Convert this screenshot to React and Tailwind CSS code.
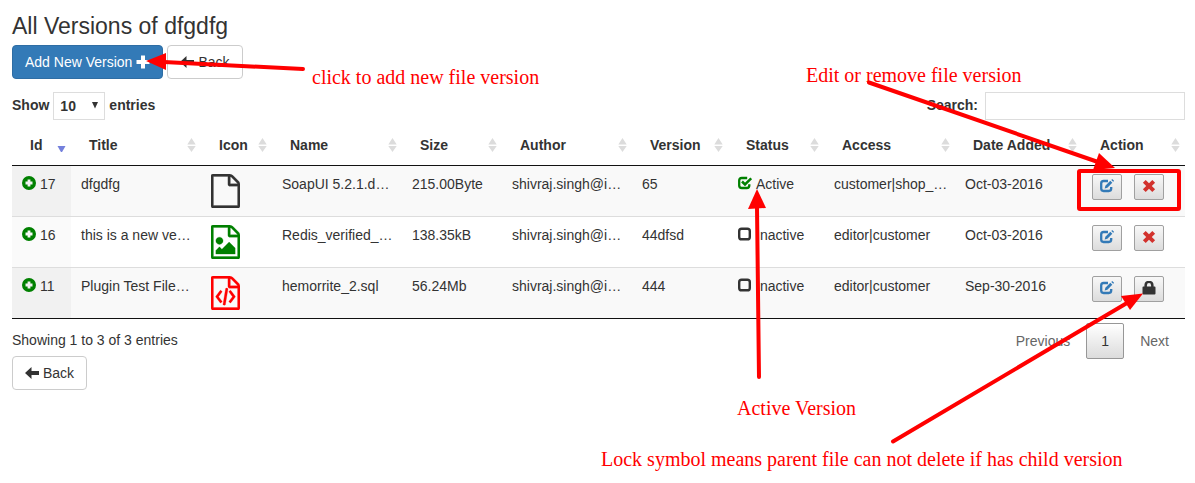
import React from "react";

const PAGE =
  "M1596 380q28 28 48 76t20 88v1152q0 40-28 68t-68 28h-1344q-40 0-68-28t-28-68v-1600q0-40 28-68t68-28h896q40 0 88 20t76 48zm-444-244v376h376q-10-29-22-41l-313-313q-12-12-41-22zm384 1528v-1024h-416q-40 0-68-28t-28-68v-416h-768v1536h1280z";
const PICTURE =
  "M1408 1216v320h-1024v-192l192-192 128 128 384-384zm-832-192q-80 0-136-56t-56-136 56-136 136-56 136 56 56 136-56 136-136 56z";
const CODE =
  "M608 768q8-11 21-12.5t24 6.5l51 38q11 8 12.5 21t-6.5 24l-182 243 182 243q8 11 6.5 24t-12.5 21l-51 38q-11 8-24 6.5t-21-12.5l-226-301q-14-19 0-38zm802 301q14 19 0 38l-226 301q-8 11-21 12.5t-24-6.5l-51-38q-11-8-12.5-21t6.5-24l182-243-182-243q-8-11-6.5-24t12.5-21l51-38q11-8 24-6.5t21 12.5zm-620 461q-13-2-20.5-13t-5.5-24l138-831q2-13 13-20.5t24-5.5l63 10q13 2 20.5 13t5.5 24l-138 831q-2 13-13 20.5t-24 5.5z";

function FileIcon({ kind }) {
  return (
    <svg
      viewBox="128 0 1536 1792"
      className="block h-[34px] w-[29px]"
      fill="currentColor"
      stroke="currentColor"
      strokeWidth="14"
      aria-hidden="true"
    >
      <path d={PAGE} />
      {kind === "image" && <path d={PICTURE} />}
      {kind === "code" && <path d={CODE} />}
    </svg>
  );
}

function Glyph({ children, className = "" }) {
  return (
    <svg viewBox="0 0 14 14" className={`size-3.5 shrink-0 ${className}`} fill="currentColor" aria-hidden="true">
      {children}
    </svg>
  );
}

const PlusIcon = () => (
  <Glyph>
    <path d="M5 .5h4V5h4.500v4H9v4.500H5V9H.5V5H5z" />
  </Glyph>
);
const BackIcon = () => (
  <Glyph>
    <path d="M0 7 6.500 1v4H14v4H6.500v4z" />
  </Glyph>
);
const ExpandIcon = () => (
  <Glyph>
    <path
      fillRule="evenodd"
      d="M7 0a7 7 0 1 1 0 14A7 7 0 0 1 7 0zM5.6 3.5v2.1H3.5v2.8h2.1v2.1h2.8V8.4h2.1V5.6H8.4V3.5z"
    />
  </Glyph>
);
const CheckedIcon = () => (
  <Glyph className="text-[#008000]">
    <path
      d="M9.200 2H3.700Q1.200 2 1.200 4.500v5Q1.200 12 3.700 12h5.100q2.500 0 2.500-2.500V8.300"
      fill="none"
      stroke="currentColor"
      strokeWidth="2.300"
    />
    <path d="m4 5.500 3 3 6.200-6.200" fill="none" stroke="currentColor" strokeWidth="2.500" />
  </Glyph>
);
const UncheckedIcon = () => (
  <Glyph>
    <rect x="1.2" y="1.700" width="10.600" height="10.600" rx="2.400" fill="none" stroke="currentColor" strokeWidth="2.400" />
  </Glyph>
);
const EditIcon = () => (
  <Glyph className="text-[#337ab7]">
    <path
      d="M8 2H3.600Q1.200 2 1.200 4.400v5.200Q1.200 12 3.600 12h5.200q2.400 0 2.400-2.400V8"
      fill="none"
      stroke="currentColor"
      strokeWidth="2.300"
    />
    <path d="m4.700 9.400.7-2.700 4.900-4.900 2 2-4.900 4.900z" />
    <path d="m11.300.9.900-.9 1.900 1.900-.9.900z" />
  </Glyph>
);
const RemoveIcon = () => (
  <Glyph className="text-[#d2322d]">
    <path d="M3.700.9 7 4.200 10.300.9l2.800 2.800L9.800 7l3.300 3.300-2.800 2.800L7 9.800l-3.300 3.300-2.800-2.800L4.200 7 .9 3.700z" />
  </Glyph>
);
const LockIcon = () => (
  <Glyph>
    <path
      fillRule="evenodd"
      d="M2.400 5.500V4.400Q2.400-.2 7-.2t4.600 4.600v1.100h1q.9 0 .9.9v6.200q0 .9-.9.9H1.400q-.9 0-.9-.9V6.400q0-.9.9-.9zM4.900 5.500h4.200V4.400Q9.100 2 7 2T4.900 4.400z"
    />
  </Glyph>
);

const columns = [
  ["Id", "w-[59px]"],
  ["Title", "w-[130px]"],
  ["Icon", "w-[71px]"],
  ["Name", "w-[130px]"],
  ["Size", "w-[100px]"],
  ["Author", "w-[130px]"],
  ["Version", "w-[96px]"],
  ["Status", "w-[96px]"],
  ["Access", "w-[131px]"],
  ["Date Added", "w-[127px]"],
  ["Action", "w-[103px]"],
];

const rows = [
  {
    id: 17, title: "dfgdfg", kind: "blank", color: "text-[#333]", name: "SoapUI 5.2.1.d…", size: "215.00Byte",
    version: "65", active: true, access: "customer|shop_…", date: "Oct-03-2016",
  },
  {
    id: 16, title: "this is a new ve…", kind: "image", color: "text-[#008000]", name: "Redis_verified_…", size: "138.35kB",
    version: "44dfsd", access: "editor|customer", date: "Oct-03-2016",
  },
  {
    id: 11, title: "Plugin Test File…", kind: "code", color: "text-[#f00]", name: "hemorrite_2.sql", size: "56.24Mb",
    version: "444", access: "editor|customer", date: "Sep-30-2016", locked: true,
  },
];

function Cell({ first, className = "", children }) {
  return (
    <td className={`px-2.5 py-2 whitespace-nowrap ${first ? "" : "border-t border-[#ddd]"} ${className}`}>{children}</td>
  );
}

function ActionButton({ label, children }) {
  return (
    <button
      type="button"
      aria-label={label}
      className="flex h-[26px] w-[30px] items-start justify-center rounded-[2px] border border-[#a0a0a0] bg-linear-to-b from-[#f8f8f8] to-[#dcdcdc] pt-1"
    >
      {children}
    </button>
  );
}

function BackButton() {
  return (
    <button type="button" className="flex h-[34px] items-center gap-1 rounded border border-[#ccc] bg-white px-3">
      <BackIcon />
      Back
    </button>
  );
}

function Note({ className, children }) {
  return (
    <p className={`absolute font-['Liberation_Serif',serif] text-xl leading-6 whitespace-nowrap text-[#f00] ${className}`}>
      {children}
    </p>
  );
}

function Annotations() {
  return (
    <div className="pointer-events-none absolute inset-0 overflow-hidden">
      <svg className="absolute top-0 left-0 h-[483px] w-[1195px]" viewBox="0 0 1195 483" fill="#f00" aria-hidden="true">
        <g fill="none" stroke="#f00" strokeWidth="4" strokeLinecap="round">
          <path d="M303 69 164 62" />
          <path d="M869 82.500 1098 162" />
          <path d="M759 377 757 207" />
          <path d="M893 441.500 1127 303" />
        </g>
        <path d="m146 61 20-8v17z" />
        <path d="m1115 168-16-15-6 17z" />
        <path d="m757 189 9 19-18 1z" />
        <path d="m1143 293.500-22 2.500 9 14z" />
        <rect x="1079" y="171" width="100" height="38" rx="1" fill="none" stroke="#f00" strokeWidth="4" />
      </svg>
      <Note className="top-[65px] left-[312px]">click to add new file version</Note>
      <Note className="top-[63px] left-[806px]">Edit or remove file version</Note>
      <Note className="top-[396px] left-[737px]">Active Version</Note>
      <Note className="top-[447px] left-[601px]">Lock symbol means parent file can not delete if has child version</Note>
    </div>
  );
}

export default function App() {
  return (
    <div className="relative min-h-screen bg-white pt-3 pr-2.5 pl-3 font-['Liberation_Sans',Arial,sans-serif] text-sm leading-5 text-[#333]">
      <h3 className="text-[23px] leading-7">All Versions of dfgdfg</h3>
      <div className="mt-[5px] flex gap-1">
        <button
          type="button"
          className="flex h-[34px] items-center gap-1 rounded border border-[#2e6da4] bg-[#337ab7] px-3 text-white"
        >
          Add New Version
          <PlusIcon />
        </button>
        <BackButton />
      </div>

      <div className="mt-[13px] flex items-start justify-between font-bold leading-[26px]">
        <label className="flex items-start gap-1">
          Show
          <span className="relative">
            <select defaultValue="10" className="block h-7 w-[52px] appearance-none border border-[#ddd] bg-white pl-1.5">
              <option>10</option>
              <option>25</option>
              <option>50</option>
              <option>100</option>
            </select>
            <svg viewBox="0 0 6 7" className="pointer-events-none absolute top-2.5 right-[7px] h-[7px] w-1.5" fill="#333" aria-hidden="true">
              <path d="M0 0h6L3 6.500z" />
            </svg>
          </span>
          entries
        </label>
        <label className="flex items-start gap-[7px]">
          Search:
          <input type="search" className="h-7 w-[200px] border border-[#ddd] bg-white px-1.5 font-normal" />
        </label>
      </div>

      <table className="mt-[5px] w-full table-fixed border-separate border-spacing-0 border-b border-[#111]">
        <thead>
          <tr>
            {columns.map(([name, width], i) => (
              <th key={name} scope="col" className={`border-b border-[#111] py-2.5 pr-[5px] pl-[18px] ${width}`}>
                <div className="flex items-center justify-between whitespace-nowrap">
                  {name}
                  <svg viewBox="0 0 9 14" className="h-3.5 w-[9px] shrink-0" aria-hidden="true">
                    {i === 0 ? (
                      <path d="M.5 8h8l-4 7z" fill="#7480dc" />
                    ) : (
                      <path d="M.3 6.500h8.400L4.500 0zM.3 8h8.400l-4.200 6z" fill="#dcdcdc" />
                    )}
                  </svg>
                </div>
              </th>
            ))}
          </tr>
        </thead>
        <tbody className="align-top">
          {rows.map((r, i) => {
            const first = i === 0;
            const striped = i % 2 === 0;
            return (
              <tr key={r.id} className={striped ? "bg-[#f9f9f9]" : "bg-white"}>
                <Cell first={first} className={striped ? "bg-[#f1f1f1]" : "bg-[#fafafa]"}>
                  <div className="flex gap-1">
                    <button type="button" aria-label={`Expand version ${r.id}`} className="flex h-[18px] items-center text-[#008000]">
                      <ExpandIcon />
                    </button>
                    {r.id}
                  </div>
                </Cell>
                <Cell first={first}>{r.title}</Cell>
                <Cell first={first} className={r.color}>
                  <FileIcon kind={r.kind} />
                </Cell>
                <Cell first={first}>{r.name}</Cell>
                <Cell first={first}>{r.size}</Cell>
                <Cell first={first}>shivraj.singh@i…</Cell>
                <Cell first={first}>{r.version}</Cell>
                <Cell first={first}>
                  <div className="flex gap-1">
                    <span className="flex h-[18px] items-center">{r.active ? <CheckedIcon /> : <UncheckedIcon />}</span>
                    {r.active ? "Active" : "Inactive"}
                  </div>
                </Cell>
                <Cell first={first}>{r.access}</Cell>
                <Cell first={first}>{r.date}</Cell>
                <Cell first={first}>
                  <div className="flex gap-3">
                    <ActionButton label="Edit">
                      <EditIcon />
                    </ActionButton>
                    <ActionButton label={r.locked ? "Locked" : "Remove"}>
                      {r.locked ? <LockIcon /> : <RemoveIcon />}
                    </ActionButton>
                  </div>
                </Cell>
              </tr>
            );
          })}
        </tbody>
      </table>

      <div className="flex items-start justify-between">
        <div className="pt-[11px]">
          <p className="mb-1.5">Showing 1 to 3 of 3 entries</p>
          <BackButton />
        </div>
        <nav aria-label="Pagination" className="mt-1 flex text-[#666]">
          <button type="button" className="h-9 px-4">Previous</button>
          <button
            type="button"
            aria-current="page"
            className="h-9 w-[38px] rounded-[2px] border border-[#979797] bg-linear-to-b from-white to-[#dcdcdc] text-[#333]"
          >
            1
          </button>
          <button type="button" className="h-9 px-4">Next</button>
        </nav>
      </div>
      <Annotations />
    </div>
  );
}
